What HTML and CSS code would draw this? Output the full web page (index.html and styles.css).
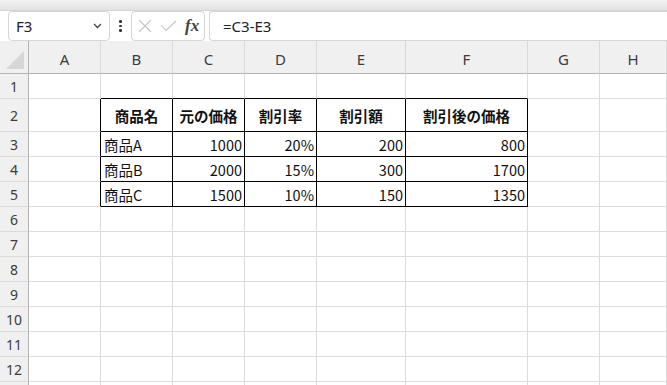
FILE: index.html
```html
<!DOCTYPE html>
<html lang="ja">
<head>
  <meta charset="UTF-8" />
  <meta name="viewport" content="width=device-width, initial-scale=1" />
  <title>Book1 - Excel</title>
  <link rel="stylesheet" href="styles.css">
</head>
<body>
  <div class="topbar"></div>

  <div class="formula-bar">
    <div class="name-box">
      <span>F3</span>
      <svg class="chevron" width="9" height="6" viewBox="0 0 9 6"><path d="M1 1 L4.5 4.5 L8 1" fill="none" stroke="#444" stroke-width="1.3"/></svg>
    </div>
    <div class="dots"><i></i><i></i><i></i></div>
    <div class="fx-box">
      <svg width="14" height="14" viewBox="0 0 14 14"><path d="M1 1 L13 13 M13 1 L1 13" stroke="#c4c4c4" stroke-width="1.1" fill="none"/></svg>
      <svg width="17" height="12" viewBox="0 0 17 12"><path d="M1 5 L6 10.5 L16 1" stroke="#c4c4c4" stroke-width="1.1" fill="none"/></svg>
      <i class="fx">fx</i>
    </div>
    <div class="formula">=C3-E3</div>
  </div>

  <div class="sheet">
    <div class="row head">
      <div class="corner"><span></span></div>
      <div class="col">A</div><div class="col">B</div><div class="col">C</div><div class="col">D</div>
      <div class="col">E</div><div class="col">F</div><div class="col">G</div><div class="col">H</div>
    </div>

    <div class="row">
      <div class="num">1</div>
      <div class="c"></div><div class="c bt"></div><div class="c bt"></div><div class="c bt"></div><div class="c bt"></div><div class="c bt"></div><div class="c"></div><div class="c"></div>
    </div>

    <div class="row tall">
      <div class="num">2</div>
      <div class="c bl"></div>
      <div class="c tb th">商品名</div>
      <div class="c tb th">元の価格</div>
      <div class="c tb th">割引率</div>
      <div class="c tb th">割引額</div>
      <div class="c tb th">割引後の価格</div>
      <div class="c"></div><div class="c"></div>
    </div>

    <div class="row">
      <div class="num">3</div>
      <div class="c bl"></div>
      <div class="c tb">商品A</div>
      <div class="c tb r">1000</div>
      <div class="c tb r">20%</div>
      <div class="c tb r">200</div>
      <div class="c tb r">800</div>
      <div class="c"></div><div class="c"></div>
    </div>

    <div class="row">
      <div class="num">4</div>
      <div class="c bl"></div>
      <div class="c tb">商品B</div>
      <div class="c tb r">2000</div>
      <div class="c tb r">15%</div>
      <div class="c tb r">300</div>
      <div class="c tb r">1700</div>
      <div class="c"></div><div class="c"></div>
    </div>

    <div class="row">
      <div class="num">5</div>
      <div class="c bl"></div>
      <div class="c tb">商品C</div>
      <div class="c tb r">1500</div>
      <div class="c tb r">10%</div>
      <div class="c tb r">150</div>
      <div class="c tb r">1350</div>
      <div class="c"></div><div class="c"></div>
    </div>

    <div class="row"><div class="num">6</div><div class="c"></div><div class="c"></div><div class="c"></div><div class="c"></div><div class="c"></div><div class="c"></div><div class="c"></div><div class="c"></div></div>
    <div class="row"><div class="num">7</div><div class="c"></div><div class="c"></div><div class="c"></div><div class="c"></div><div class="c"></div><div class="c"></div><div class="c"></div><div class="c"></div></div>
    <div class="row"><div class="num">8</div><div class="c"></div><div class="c"></div><div class="c"></div><div class="c"></div><div class="c"></div><div class="c"></div><div class="c"></div><div class="c"></div></div>
    <div class="row"><div class="num">9</div><div class="c"></div><div class="c"></div><div class="c"></div><div class="c"></div><div class="c"></div><div class="c"></div><div class="c"></div><div class="c"></div></div>
    <div class="row"><div class="num">10</div><div class="c"></div><div class="c"></div><div class="c"></div><div class="c"></div><div class="c"></div><div class="c"></div><div class="c"></div><div class="c"></div></div>
    <div class="row"><div class="num">11</div><div class="c"></div><div class="c"></div><div class="c"></div><div class="c"></div><div class="c"></div><div class="c"></div><div class="c"></div><div class="c"></div></div>
    <div class="row"><div class="num">12</div><div class="c"></div><div class="c"></div><div class="c"></div><div class="c"></div><div class="c"></div><div class="c"></div><div class="c"></div><div class="c"></div></div>
    <div class="row"><div class="num"></div><div class="c"></div><div class="c"></div><div class="c"></div><div class="c"></div><div class="c"></div><div class="c"></div><div class="c"></div><div class="c"></div></div>
  </div>
</body>
</html>
```

FILE: styles.css
```css
* {
  box-sizing: border-box;
}

body {
  margin: 0;
  background: #fff;
  font-family: "Noto Sans", "Noto Sans CJK JP", sans-serif;
  color: #222;
  overflow: hidden;
}

.topbar {
  height: 11px;
  background: linear-gradient(#f3f3f3, #e2e2e2);
  border-bottom: 1px solid #d4d4d4;
}

/* formula bar */
.formula-bar {
  display: flex;
  align-items: stretch;
  height: 30px;
  padding-left: 8px;
}

.name-box {
  width: 102px;
  height: 30px;
  display: flex;
  align-items: center;
  justify-content: space-between;
  padding: 0 7px 0 7px;
  border: 1px solid #d6d6d6;
  border-radius: 4px;
  font-size: 15px;
  color: #222;
}

.dots {
  width: 21px;
  display: flex;
  flex-direction: column;
  align-items: center;
  justify-content: center;
  gap: 2px;
}

.dots i {
  width: 2.5px;
  height: 2.5px;
  border-radius: 50%;
  background: #333;
}

.fx-box {
  width: 74px;
  display: flex;
  align-items: center;
  gap: 8px;
  padding-left: 6px;
  border: 1px solid #d6d6d6;
  border-radius: 4px;
}

.fx {
  font-family: "Liberation Serif", serif;
  font-weight: bold;
  font-size: 17px;
  color: #444;
}

.formula {
  flex: 1;
  margin-left: 4px;
  display: flex;
  align-items: center;
  padding-left: 13px;
  border: 1px solid #d6d6d6;
  border-right: none;
  border-radius: 4px 0 0 4px;
  font-size: 15px;
  color: #222;
}

/* sheet grid */
.row {
  display: grid;
  grid-template-columns: 29px 72px 72px 72px 72px 89px 122px 72px 1fr;
  height: 25px;
}

.row.head,
.row.tall {
  height: 33px;
}

.corner,
.col,
.num {
  background: #f0f0f0;
  color: #3c3c3c;
}

.corner {
  position: relative;
  border-right: 1px solid #b4b4b4;
  border-bottom: 1px solid #b4b4b4;
}

.corner span {
  position: absolute;
  right: 4px;
  bottom: 4px;
  width: 0;
  height: 0;
  border-left: 18px solid transparent;
  border-bottom: 18px solid #d6d6d6;
}

.col {
  display: flex;
  align-items: flex-end;
  justify-content: center;
  padding-bottom: 4px;
  font-size: 15px;
  border-right: 1px solid #d9d9d9;
  border-bottom: 1px solid #b4b4b4;
}

.num {
  display: flex;
  align-items: center;
  justify-content: center;
  font-size: 14px;
  border-right: 1px solid #b4b4b4;
  border-bottom: 1px solid #dadada;
}

.c {
  display: flex;
  align-items: center;
  padding: 0 3px 0 3px;
  font-family: "Noto Sans CJK JP", sans-serif;
  font-size: 14.5px;
  color: #111;
  white-space: nowrap;
  border-right: 1px solid #dcdcdc;
  border-bottom: 1px solid #dcdcdc;
}

.c.r {
  justify-content: flex-end;
  padding-right: 2px;
}

.c.th {
  justify-content: center;
  font-weight: bold;
}

/* black table borders */
.c.tb {
  border-right-color: #000;
  border-bottom-color: #000;
}

.c.bl {
  border-right-color: #000;
}

.c.bt {
  border-bottom-color: #000;
}
```
